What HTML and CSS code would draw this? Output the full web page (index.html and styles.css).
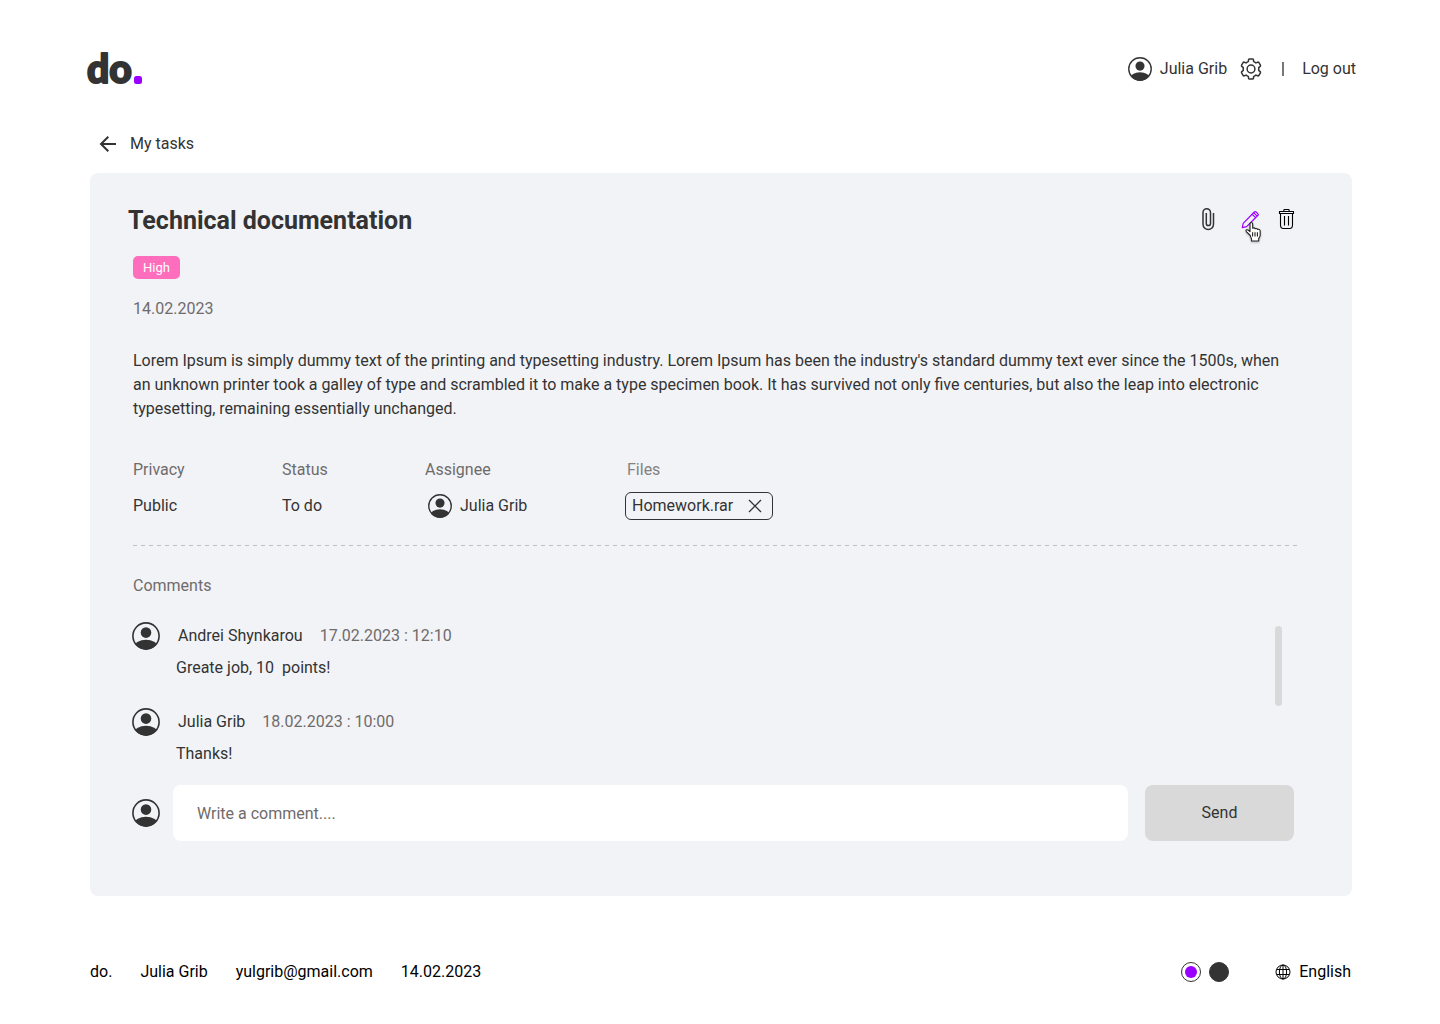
FILE: index.html
```html
<!DOCTYPE html>
<html lang="en">
<head>
<meta charset="utf-8">
<meta name="viewport" content="width=device-width, initial-scale=1">
<title>do. Technical documentation</title>
<link rel="stylesheet" href="styles.css">
</head>
<body>
<svg class="sprite" aria-hidden="true">
  <symbol id="avatar" viewBox="0 0 28 28">
    <clipPath id="avatar-clip"><circle cx="14" cy="14" r="13.5"/></clipPath>
    <circle cx="14" cy="14" r="13.1" fill="none" stroke="currentColor" stroke-width="1.6"/>
    <circle cx="14" cy="10.6" r="5.3" fill="currentColor"/>
    <ellipse cx="14" cy="24.6" rx="11.5" ry="6.8" fill="currentColor" clip-path="url(#avatar-clip)"/>
  </symbol>
</svg>

<header class="header">
  <a class="logo" href="#" aria-label="do. home">
    <svg width="60" height="48" viewBox="0 0 60 48">
      <text class="logo-text" x="1" y="38">do</text>
      <rect x="48" y="31" width="8" height="8" rx="2.5" fill="#9a00ff"/>
    </svg>
  </a>
  <nav class="account">
    <a class="account-user" href="#"><svg class="avatar avatar-small"><use href="#avatar"/></svg>Julia Grib</a>
    <button class="icon-button settings" type="button" aria-label="Settings">
      <svg width="24" height="24" viewBox="0 0 24 24" fill="none" stroke="currentColor" stroke-width="1.5" stroke-linejoin="round">
        <circle cx="12" cy="12" r="3.9"/>
        <path d="M9.3 4.6 9.6 2.7Q9.7 1.9 10.5 1.9H13.5Q14.3 1.9 14.4 2.7L14.7 4.6Q15.8 5 16.9 5.9L18.7 5.2Q19.5 4.9 19.9 5.6L21.4 8.1Q21.8 8.8 21.2 9.4L19.7 10.6Q19.9 12 19.7 13.4L21.2 14.6Q21.8 15.2 21.4 15.9L19.9 18.4Q19.5 19.1 18.7 18.8L16.9 18.1Q15.8 19 14.7 19.4L14.4 21.3Q14.3 22.1 13.5 22.1H10.5Q9.7 22.1 9.6 21.3L9.3 19.4Q8.2 19 7.1 18.1L5.3 18.8Q4.5 19.1 4.1 18.4L2.6 15.9Q2.2 15.2 2.8 14.6L4.3 13.4Q4.1 12 4.3 10.6L2.8 9.4Q2.2 8.8 2.6 8.1L4.1 5.6Q4.5 4.9 5.3 5.2L7.1 5.9Q8.2 5 9.3 4.6Z"/>
      </svg>
    </button>
    <span class="divider"></span>
    <a href="#">Log out</a>
  </nav>
</header>

<main class="main">
  <a class="back" href="#">
    <svg width="24" height="24" viewBox="0 0 24 24" fill="none" stroke="currentColor" stroke-width="2"><path d="M20 12H5M12.3 4.7 5 12l7.3 7.3"/></svg>
    My tasks
  </a>

  <article class="card">
    <div class="card-head">
      <h1 class="title">Technical documentation</h1>
      <div class="actions">
        <button class="icon-button" type="button" aria-label="Attach file">
          <svg width="24" height="24" viewBox="0 0 24 24" fill="none" stroke="#333" stroke-width="1.5"><path d="M18.5 6v11.3a5.2 5.2 0 0 1-10.5 0V5.4a3.7 3.7 0 0 1 7.5 0v11a2 2 0 0 1-4.2 0V6"/></svg>
        </button>
        <button class="icon-button edit" type="button" aria-label="Edit task">
          <svg width="24" height="24" viewBox="0 0 24 24" fill="none" stroke="#9a00ff" stroke-width="1.2" stroke-linejoin="round"><path d="M7.3 20.6 8.2 16.4 19.3 5Q20.2 4.1 21.1 5L22.9 6.8Q23.6 7.7 22.8 8.5L11.6 19.7ZM17 7.2l3.5 3.5M18.6 5.7l3.5 3.5"/></svg>
          <svg class="cursor" width="20" height="22" viewBox="0 0 20 22"><path d="M6.3 14.5 2.5 10.8Q1.4 9.4 2.6 8.8 3.6 8.4 4.8 9.5L6 10.7V2.8Q6.1 1.5 7.3 1.5T8.7 2.8V7.2Q10.4 6.3 11.3 7.7 12.9 7 13.7 8.4 16.2 7.8 16.2 10.5V14Q16 16.2 14.7 17.5V20H7.5V17.8Q6.6 16.2 6.3 14.5Z" fill="#fff" stroke="#222" stroke-width="1.1" stroke-linejoin="round"/><path d="M8.6 11.2v4.2M11 11.2v4.2M13.4 11.2v4.2" stroke="#222" stroke-width="1.1"/></svg>
        </button>
        <button class="icon-button" type="button" aria-label="Delete task">
          <svg width="24" height="24" viewBox="0 0 24 24" fill="none" stroke="#000" stroke-width="1.1"><path d="M4.5 4.5h14v2h-14zM8.8 4.5V3.4Q8.8 2.5 9.6 2.5h3.8q.8 0 .8.9v1.1M5.5 6.5v11.6q0 3.4 2.8 3.4h6.4q2.8 0 2.8-3.4V6.5M9.5 9v9.5M13.5 9v9.5"/></svg>
        </button>
      </div>
    </div>

    <div class="card-body">
      <span class="priority">High</span>
      <time class="date" datetime="2023-02-14">14.02.2023</time>
      <p class="description">Lorem Ipsum is simply dummy text of the printing and typesetting industry. Lorem Ipsum has been the industry's standard dummy text ever since the 1500s, when an unknown printer took a galley of type and scrambled it to make a type specimen book. It has survived not only five centuries, but also the leap into electronic typesetting, remaining essentially unchanged.</p>

      <dl class="details">
        <div><dt>Privacy</dt><dd>Public</dd></div>
        <div><dt>Status</dt><dd>To do</dd></div>
        <div><dt>Assignee</dt><dd class="assignee"><svg class="avatar avatar-small"><use href="#avatar"/></svg>Julia Grib</dd></div>
        <div><dt class="files-label">Files</dt><dd><span class="file">Homework.rar<button class="icon-button" type="button" aria-label="Remove Homework.rar"><svg width="14" height="14" viewBox="0 0 14 14" fill="none" stroke="#333" stroke-width="1.3"><path d="m1 1 12 12M13 1 1 13"/></svg></button></span></dd></div>
      </dl>

      <svg class="separator" aria-hidden="true"><line x1="0" y1="0.5" x2="100%" y2="0.5" stroke="#c0c0c3" stroke-dasharray="4 4"/></svg>
    </div>

    <section class="comments">
      <h2 class="comments-title">Comments</h2>
      <div class="comments-view">
        <ul class="comment-list">
          <li class="comment">
            <svg class="avatar"><use href="#avatar"/></svg>
            <div>
              <div class="comment-meta"><span>Andrei Shynkarou</span><time>17.02.2023 : 12:10</time></div>
              <p class="comment-text">Greate job, 10  points!</p>
            </div>
          </li>
          <li class="comment">
            <svg class="avatar"><use href="#avatar"/></svg>
            <div>
              <div class="comment-meta"><span>Julia Grib</span><time>18.02.2023 : 10:00</time></div>
              <p class="comment-text">Thanks!</p>
            </div>
          </li>
        </ul>
        <div class="scroll-thumb"></div>
      </div>
      <form class="comment-form">
        <svg class="avatar"><use href="#avatar"/></svg>
        <input class="comment-input" type="text" aria-label="Comment" placeholder="Write a comment....">
        <button class="send" type="button">Send</button>
      </form>
    </section>
  </article>
</main>

<footer class="footer">
  <div class="footer-info">
    <span>do.</span>
    <span>Julia Grib</span>
    <a href="mailto:yulgrib@gmail.com">yulgrib@gmail.com</a>
    <time datetime="2023-02-14">14.02.2023</time>
  </div>
  <div class="footer-settings">
    <div class="themes">
      <input class="theme theme-purple" type="radio" name="theme" aria-label="Purple theme" checked>
      <input class="theme theme-dark" type="radio" name="theme" aria-label="Dark theme">
    </div>
    <button class="language" type="button">
      <svg width="16" height="16" viewBox="0 0 16 16" fill="none" stroke="currentColor" stroke-width="1"><circle cx="8" cy="8" r="7"/><ellipse cx="8" cy="8" rx="3.6" ry="7"/><path d="M8 1v14M1.7 5.5h12.6M1.7 10.5h12.6"/></svg>
      English
    </button>
  </div>
</footer>
</body>
</html>
```

FILE: styles.css
```css
* {
  box-sizing: border-box;
}

body {
  margin: 0;
  background: #fff;
  color: #333;
  font: 16px/24px Roboto, sans-serif;
}

a {
  color: inherit;
  text-decoration: none;
}

h1, h2, p, dl, dd, ul {
  margin: 0;
  padding: 0;
}

button, input {
  font: inherit;
  color: inherit;
}

svg {
  display: block;
  flex: none;
}

.sprite {
  position: absolute;
  width: 0;
  height: 0;
}

.icon-button {
  display: flex;
  padding: 0;
  border: 0;
  background: none;
  cursor: pointer;
}

.avatar {
  width: 28px;
  height: 28px;
}

.avatar-small {
  width: 24px;
  height: 24px;
}

/* Header */
.header {
  display: flex;
  align-items: center;
  justify-content: space-between;
  padding: 45px 84px 39px 86px;
}

.logo-text {
  font: 900 39px Lato, sans-serif;
  fill: #333;
  stroke: #333;
  stroke-width: 2px;
  stroke-linejoin: round;
}

.account {
  display: flex;
  align-items: center;
}

.account-user {
  display: flex;
  align-items: center;
  gap: 8px;
}

.settings {
  margin-left: 12px;
}

.divider {
  width: 2px;
  height: 14px;
  margin: 0 18px 0 19px;
  background: #777;
}

/* Task card */
.main {
  padding: 0 88px 0 90px;
}

.back {
  display: flex;
  align-items: center;
  gap: 10px;
  width: max-content;
  margin: 0 0 17px 6px;
}

.card {
  padding: 32px 53px 55px 38px;
  border-radius: 8px;
  background: #f2f3f7;
}

.card-head {
  display: flex;
  justify-content: space-between;
}

.title {
  font-size: 25px;
  line-height: 32px;
  font-weight: 700;
}

.actions {
  display: flex;
  gap: 16px;
  padding-top: 2px;
}

.edit {
  position: relative;
}

.cursor {
  position: absolute;
  top: 14px;
  left: 9px;
  filter: drop-shadow(0 1px 1px #0004);
}

.card-body {
  padding-left: 5px;
}

.priority {
  display: block;
  width: max-content;
  margin-top: 19px;
  padding: 0 10px;
  border-radius: 5px;
  background: #ff6dbd;
  color: #fff;
  font-size: 13px;
  line-height: 23px;
}

.date {
  display: block;
  margin-top: 18px;
  color: #6f6b6b;
}

.description {
  margin-top: 28px;
}

.details {
  display: grid;
  grid-template-columns: 149px 143px 200px 1fr;
  margin-top: 37px;
}

.details dt {
  margin-bottom: 10px;
  color: #6f6b6b;
}

.details .files-label {
  padding-left: 2px;
  color: #828282;
}

.details dd {
  display: flex;
  align-items: center;
  height: 28px;
}

.details .assignee {
  gap: 8px;
  padding-left: 3px;
}

.file {
  display: flex;
  align-items: center;
  gap: 15px;
  height: 28px;
  padding: 0 10px 0 6px;
  border: 1px solid #333;
  border-radius: 6px;
}

.separator {
  width: 100%;
  height: 1px;
  margin-top: 25px;
}

/* Comments */
.comments {
  margin-top: 28px;
  padding: 0 5px 0 4px;
}

.comments-title {
  padding-left: 1px;
  color: #6f6b6b;
  font-size: 16px;
  font-weight: 400;
}

.comments-view {
  display: flex;
  justify-content: space-between;
  padding: 24px 12px 0 0;
}

.comment-list {
  display: grid;
  gap: 28px;
  list-style: none;
}

.comment {
  display: flex;
  gap: 16px;
}

.comment-meta {
  display: flex;
  gap: 17px;
  padding: 2px 0 0 2px;
}

.comment-meta time {
  color: #6f6b6b;
}

.comment-text {
  margin-top: 8px;
  white-space: pre;
}

.scroll-thumb {
  width: 7px;
  height: 80px;
  margin-top: 4px;
  border-radius: 4px;
  background: #d9d9d9;
}

.comment-form {
  display: flex;
  align-items: center;
  margin-top: 19px;
}

.comment-input {
  flex: 1;
  min-width: 0;
  height: 56px;
  margin: 0 17px 0 13px;
  padding: 0 24px;
  border: 0;
  border-radius: 8px;
  background: #fff;
}

.comment-input::placeholder {
  color: #6f6b6b;
  opacity: 1;
}

.send {
  width: 149px;
  height: 56px;
  border: 0;
  border-radius: 8px;
  background: #d9d9d9;
}

/* Footer */
.footer {
  display: flex;
  align-items: center;
  justify-content: space-between;
  padding: 64px 89px 40px 90px;
  color: #000;
}

.footer-info {
  display: flex;
  gap: 28px;
}

.footer-settings {
  display: flex;
  align-items: center;
  gap: 46px;
}

.themes {
  display: flex;
  gap: 8px;
}

.theme {
  appearance: none;
  width: 20px;
  height: 20px;
  margin: 0;
  border: 1px solid #333;
  border-radius: 50%;
}

.theme-purple {
  padding: 3px;
  background: #9a00ff content-box;
}

.theme-dark {
  background: #333;
}

.language {
  display: flex;
  align-items: center;
  gap: 8px;
  padding: 0;
  border: 0;
  background: none;
}
```
